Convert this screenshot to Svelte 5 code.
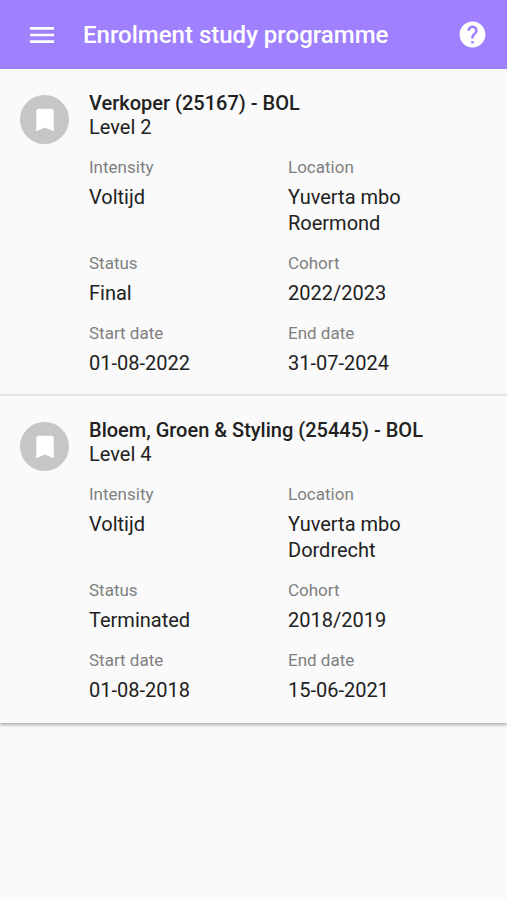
<script lang="ts">
  interface Enrolment {
    title: string;
    level: string;
    fields: { label: string; value: string }[];
  }

  const enrolments: Enrolment[] = [
    {
      title: 'Verkoper (25167) - BOL',
      level: 'Level 2',
      fields: [
        { label: 'Intensity', value: 'Voltijd' },
        { label: 'Location', value: 'Yuverta mbo Roermond' },
        { label: 'Status', value: 'Final' },
        { label: 'Cohort', value: '2022/2023' },
        { label: 'Start date', value: '01-08-2022' },
        { label: 'End date', value: '31-07-2024' },
      ],
    },
    {
      title: 'Bloem, Groen & Styling (25445) - BOL',
      level: 'Level 4',
      fields: [
        { label: 'Intensity', value: 'Voltijd' },
        { label: 'Location', value: 'Yuverta mbo Dordrecht' },
        { label: 'Status', value: 'Terminated' },
        { label: 'Cohort', value: '2018/2019' },
        { label: 'Start date', value: '01-08-2018' },
        { label: 'End date', value: '15-06-2021' },
      ],
    },
  ];
</script>

<div class="page">
  <header class="toolbar">
    <button class="icon-btn menu" aria-label="Menu">
      <svg viewBox="0 0 24 24" fill="currentColor"><path d="M3 18h18v-2H3v2zm0-5h18v-2H3v2zm0-7v2h18V6H3z"/></svg>
    </button>
    <h1>Enrolment study programme</h1>
    <button class="icon-btn" aria-label="Help">
      <svg viewBox="0 0 24 24" fill="currentColor"><path d="M12 2C6.48 2 2 6.48 2 12s4.48 10 10 10 10-4.48 10-10S17.52 2 12 2zm1 17h-2v-2h2v2zm2.07-7.75l-.9.92C13.45 12.9 13 13.5 13 15h-2v-.5c0-1.1.45-2.1 1.17-2.83l1.24-1.26c.37-.36.59-.86.59-1.41 0-1.1-.9-2-2-2s-2 .9-2 2H8c0-2.21 1.79-4 4-4s4 1.79 4 4c0 .88-.36 1.68-.93 2.25z"/></svg>
    </button>
  </header>

  <main>
    {#each enrolments as enrolment}
      <article class="card">
        <div class="avatar">
          <svg viewBox="0 0 24 24" fill="currentColor"><path d="M17 3H7c-1.1 0-2 .9-2 2v16l7-3 7 3V5c0-1.1-.9-2-2-2z"/></svg>
        </div>
        <div class="content">
          <h2>{enrolment.title}</h2>
          <p class="level">{enrolment.level}</p>
          <dl>
            {#each enrolment.fields as field}
              <div class="field">
                <dt>{field.label}</dt>
                <dd>{field.value}</dd>
              </div>
            {/each}
          </dl>
        </div>
      </article>
    {/each}
  </main>
</div>

<style>
  :global(body) {
    background: #fafafa;
  }

  .page {
    min-height: 100vh;
    background: #fafafa;
    font-family: Roboto, sans-serif;
    color: #212121;
  }

  .toolbar {
    display: flex;
    align-items: center;
    height: 69px;
    padding: 0 19px 0 26px;
    background: #9f80ff;
    color: #fff;
  }

  .icon-btn {
    display: flex;
    padding: 0;
    border: none;
    background: none;
    color: inherit;
    cursor: pointer;
  }

  .icon-btn svg {
    width: 31px;
    height: 31px;
  }

  .icon-btn.menu svg {
    width: 32px;
    height: 32px;
  }

  h1 {
    flex: 1;
    margin: 0 0 0 25px;
    font-size: 24px;
    font-weight: 500;
    line-height: 32px;
  }

  main {
    box-shadow: 0 2px 3px rgba(0, 0, 0, 0.3);
  }

  .card {
    display: flex;
    gap: 20px;
    padding: 22px 20px 18px;
    border-bottom: 2px solid #e6e6e6;
  }

  .card:last-child {
    border-bottom-color: transparent;
  }

  .avatar {
    display: flex;
    align-items: center;
    justify-content: center;
    flex-shrink: 0;
    width: 49px;
    height: 49px;
    margin-top: 4px;
    border-radius: 50%;
    background: #c6c6c6;
    color: #fff;
  }

  .avatar svg {
    width: 30px;
    height: 30px;
  }

  .content {
    flex: 1;
    min-width: 0;
  }

  h2,
  .level {
    margin: 0;
    font-size: 20px;
    line-height: 24px;
  }

  h2 {
    font-weight: 500;
  }

  .level {
    font-weight: 400;
  }

  dl {
    display: grid;
    grid-template-columns: 1fr 1fr;
    row-gap: 14px;
    margin: 15px 0 0;
  }

  .field {
    padding-right: 60px;
  }

  dt {
    color: #808080;
    font-size: 17px;
    line-height: 26px;
  }

  dd {
    margin: 4px 0 0;
    font-size: 20px;
    line-height: 26px;
  }
</style>
